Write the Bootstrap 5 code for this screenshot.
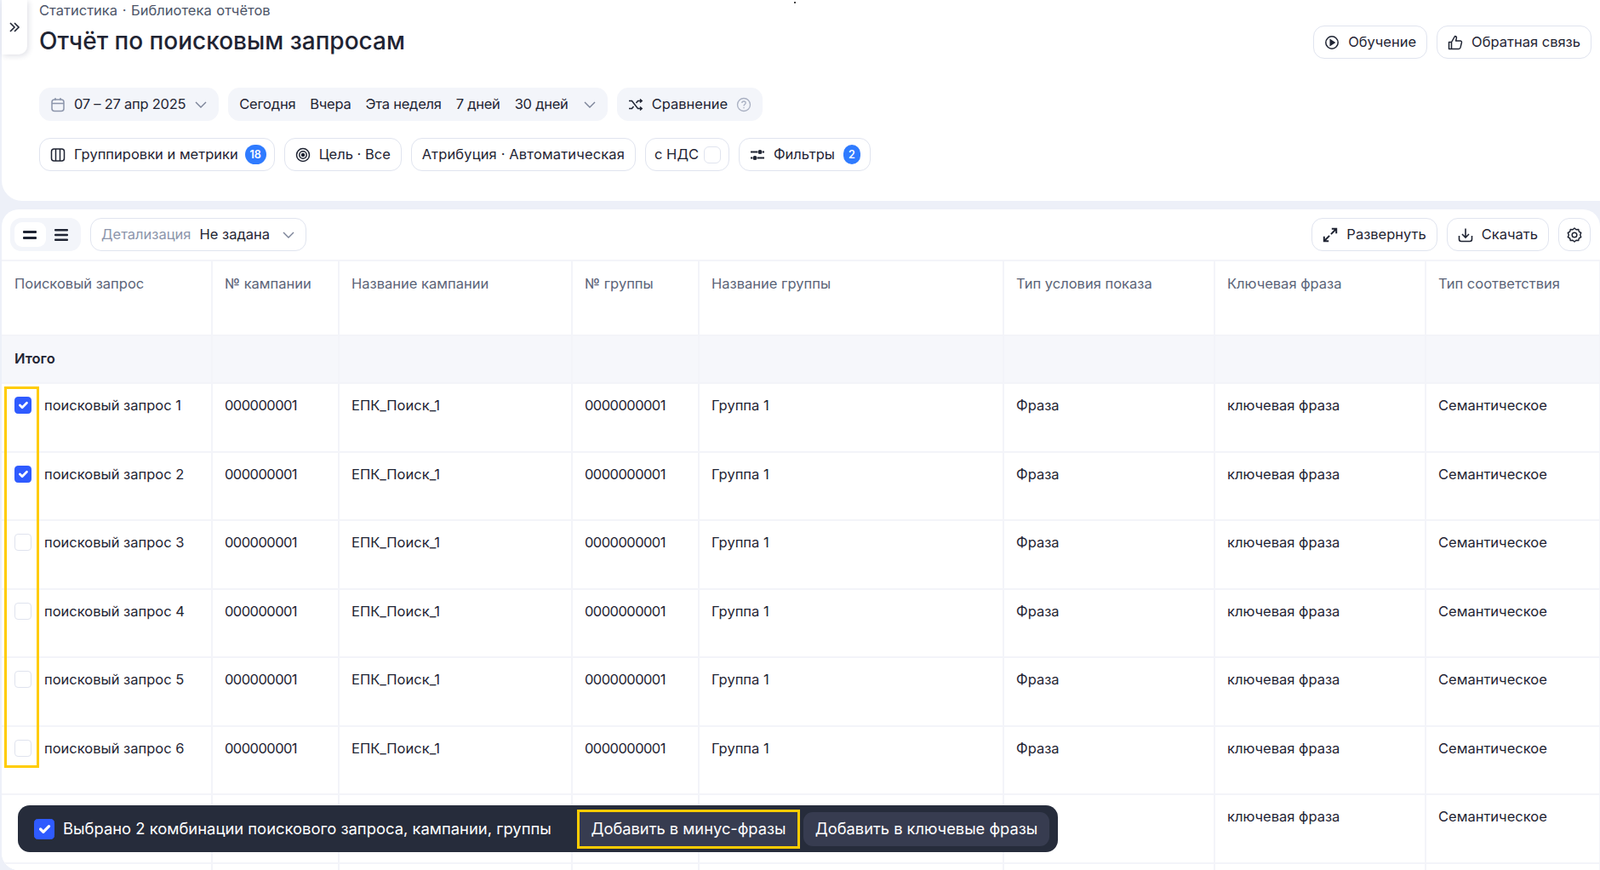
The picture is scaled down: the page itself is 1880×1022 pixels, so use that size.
<!DOCTYPE html>
<html lang="ru">
<head>
<meta charset="utf-8">
<title>Отчёт по поисковым запросам</title>
<link href="https://cdn.jsdelivr.net/npm/bootstrap@5.3.2/dist/css/bootstrap.min.css" rel="stylesheet">
<style>
  html, body     { height:100%; }
  body           { background:#edf0f8; color:#1f2433; font-family:Inter,"Noto Sans",sans-serif; font-size:16.5px; overflow:hidden; }
  svg            { flex:none; display:block; }
  .top-panel     { height:236px; margin-left:2px; background:#fff; border-bottom-left-radius:24px; padding:0 10px 0 44px; position:relative; }
  .side-tab      { position:absolute; left:0; top:0; width:30px; height:64px; background:#fff; border-radius:0 0 10px 0; box-shadow:2px 2px 6px rgba(40,50,90,.14); }
  .speck         { position:absolute; left:931px; top:2px; width:2px; height:2px; background:#444; }
  .crumbs        { color:#4d5568; line-height:24px; height:25px; word-spacing:1px; }
  .page-title    { font-size:28px; line-height:36px; font-weight:500; margin:0; padding-top:5px; }
  .head-row      { height:43px; }
  .head-btns     { gap:11px; padding-top:5px; }
  .tool-btn      { height:39px; padding:0 12px; gap:10px; border:1.5px solid #e0e4ef; border-radius:13px; background:#fff; color:#1f2433; font-size:16.5px; white-space:nowrap; }
  .tool-btn.soft { border-color:#f3f5fa; background:#f3f5fa; }
  .tight-text    { letter-spacing:-.25px; }
  .wide-text     { letter-spacing:.15px; }
  .tool-count    { min-width:25px; height:23px; padding:0 5px; border-radius:12px; background:#2f7bff; color:#fff; font-size:12.500px; font-weight:600; line-height:23px; text-align:center; margin:0 -3px 0 -2px; }
  .count-one     { min-width:20px; padding:0; margin:0 -1px 0 0; }
  .quick-gap     { gap:17px; }
  .mini-check    { width:20px; height:20px; border:1.5px solid #e0e4ef; border-radius:6px; }
  .tool-btn.vat-btn { gap:6px; padding:0 9px 0 10px; }
  .gear-btn      { width:38px; }
  .filter-rows   { padding-top:35px; gap:20px; }
  .btn-line      { gap:11px; }
  .table-panel   { position:relative; height:776px; margin:10px 0 0 2px; background:#fff; border-radius:20px 20px 0 20px; overflow:hidden; }
  .bar-row       { height:59px; padding:10px 11px 0 10px; }
  .view-switch   { width:83px; height:39px; padding:5px; background:#f3f5fa; border-radius:13px; }
  .view-switch span { width:37px; height:29px; border-radius:9px; }
  .view-switch .on  { background:#fff; }
  .muted-label   { color:#8c95ab; }
  .report-table  { table-layout:fixed; width:1878px; border-collapse:collapse; margin:0; }
  .report-table th, .report-table td { border:2px solid #f3f4f9; padding:13px 15px 13px 14px; line-height:24px; vertical-align:top; background:#fff; color:#1f2433; font-weight:400; box-shadow:none; }
  .report-table th:first-child, .report-table td:first-child { border-left:0; padding-left:15px; }
  .report-table thead th { height:88px; padding-top:14px; color:#5b6478; }
  .report-table .total-row td { height:56px; padding-top:14px; background:#f6f7fb; font-weight:600; }
  .report-table tbody tr.data-row td { height:80.5px; }
  .report-table td.num-cell { letter-spacing:-.55px; }
  .pick-cell     { gap:15px; }
  .pick-box      { width:20px; height:20px; margin:2px 0 0; border:1.5px solid #dfe3ee; border-radius:6px; flex:none; box-shadow:none; }
  .pick-box:checked { background-color:#2f5bff; border-color:#2f5bff; }
  .yellow-frame  { position:absolute; left:3px; top:208px; width:41px; height:448px; border:3px solid #ffcc00; pointer-events:none; }
  .action-bar    { position:absolute; left:19px; top:700px; width:1222px; height:55px; padding:0 10px 0 19px; background:#262c3b; border-radius:14px; color:#fff; font-size:18.400px; }
  .action-bar .pick-box { width:24px; height:24px; margin:0 10px 0 0; border-color:#2f5bff; }
  .action-btn    { height:40px; padding:0 12px; background:#373c50; border:0; border-radius:11px; color:#fff; font-size:18.300px; white-space:nowrap; }
  .action-btn.marked { height:46px; width:262px; border:3px solid #ffcc00; border-radius:0; padding:0; }
  .action-btn.plain  { width:289px; margin-left:4px; }
</style>
</head>
<body>

<!-- верхняя панель -->
<div class="top-panel">
  <div class="side-tab d-flex align-items-center justify-content-center">
    <svg width="14" height="14" viewBox="0 0 14 14" fill="none" stroke="#1f2433" stroke-width="1.6"><path d="M2 2l5 5-5 5M7 2l5 5-5 5"/></svg>
  </div>
  <div class="speck"></div>

  <div class="crumbs">Статистика · Библиотека отчётов</div>
  <div class="head-row d-flex align-items-start justify-content-between">
    <h1 class="page-title">Отчёт по поисковым запросам</h1>
    <div class="head-btns d-flex">
      <button class="btn tool-btn d-flex align-items-center">
        <svg width="18" height="18" viewBox="0 0 18 18" fill="none" stroke="#1f2433" stroke-width="1.5"><circle cx="9" cy="9" r="7.2"/><path d="M7.2 5.8v6.4L12 9z" fill="#1f2433"/></svg>
        Обучение
      </button>
      <button class="btn tool-btn d-flex align-items-center">
        <svg width="18" height="18" viewBox="0 0 18 18" fill="none" stroke="#1f2433" stroke-width="1.5" stroke-linejoin="round"><path d="M1.5 8.5h3v8h-3zM4.5 8.5L8.5 1.5c1.6 0 2.2 1.2 1.8 2.6L9.6 7h5.2c1.2 0 1.9 1 1.6 2.1l-1.4 5.8c-.3 1-1 1.6-2 1.6H4.500"/></svg>
        Обратная связь
      </button>
    </div>
  </div>

  <div class="filter-rows d-flex flex-column">
    <div class="btn-line d-flex">
      <button class="btn tool-btn soft tight-text d-flex align-items-center">
        <svg width="18" height="18" viewBox="0 0 18 18" fill="none" stroke="#8c95ab" stroke-width="1.5"><rect x="2" y="3" width="14" height="13.500" rx="3"/><path d="M2 7.500h14M6 1v3M12 1v3"/></svg>
        07 – 27 апр 2025
        <svg width="16" height="16" viewBox="0 0 16 16" fill="none" stroke="#7a8297" stroke-width="1.4"><path d="M2 5l6 6 6-6"/></svg>
      </button>
      <div class="btn tool-btn soft tight-text d-flex align-items-center quick-gap">
        <span>Сегодня</span><span>Вчера</span><span>Эта неделя</span><span>7 дней</span><span>30 дней</span>
        <svg class="ms-n1" width="16" height="16" viewBox="0 0 16 16" fill="none" stroke="#7a8297" stroke-width="1.400"><path d="M2 5l6 6 6-6"/></svg>
      </div>
      <button class="btn tool-btn soft d-flex align-items-center">
        <svg width="18" height="18" viewBox="0 0 18 18" fill="none" stroke="#1f2433" stroke-width="1.500"><path d="M1 4.500h3.500l7 9H16M1 13.500h3.500l2-2.500M9.500 7l2-2.500H16M14 2.500l2.200 2-2.200 2M14 11.500l2.200 2-2.200 2"/></svg>
        Сравнение
        <svg width="18" height="18" viewBox="0 0 18 18" fill="none" stroke="#a9b0c2" stroke-width="1.300"><circle cx="9" cy="9" r="7.500"/><path d="M6.800 7c0-1.300 1-2 2.200-2s2.200.8 2.200 1.900c0 1.600-2.200 1.700-2.200 3.500M9 12v1.300"/></svg>
      </button>
    </div>
    <div class="btn-line d-flex">
      <button class="btn tool-btn d-flex align-items-center">
        <svg width="18" height="18" viewBox="0 0 18 18" fill="none" stroke="#1f2433" stroke-width="1.500"><rect x="1.500" y="2" width="15" height="14" rx="3"/><path d="M6.500 2v14M11.500 2v14"/></svg>
        Группировки и метрики
        <span class="tool-count">18</span>
      </button>
      <button class="btn tool-btn d-flex align-items-center">
        <svg width="18" height="18" viewBox="0 0 18 18" fill="none" stroke="#1f2433" stroke-width="1.500"><circle cx="9" cy="9" r="7.500"/><circle cx="9" cy="9" r="4.200"/><circle cx="9" cy="9" r="1.500" fill="#1f2433"/></svg>
        Цель · Все
      </button>
      <button class="btn tool-btn wide-text d-flex align-items-center">Атрибуция · Автоматическая</button>
      <button class="btn tool-btn vat-btn d-flex align-items-center">с НДС <span class="mini-check"></span></button>
      <button class="btn tool-btn d-flex align-items-center">
        <svg width="18" height="18" viewBox="0 0 18 18" fill="none" stroke="#1f2433" stroke-width="2"><path d="M1 5.500h8M15 5.500h2M1 12.500h2M9 12.500h8"/><circle cx="12" cy="5.500" r="2.500" fill="#1f2433" stroke="none"/><circle cx="6" cy="12.500" r="2.500" fill="#1f2433" stroke="none"/></svg>
        Фильтры
        <span class="tool-count count-one">2</span>
      </button>
    </div>
  </div>
</div>

<!-- таблица -->
<div class="table-panel">
  <div class="bar-row d-flex align-items-start justify-content-between">
    <div class="btn-line d-flex">
      <div class="view-switch d-flex">
        <span class="on d-flex align-items-center justify-content-center">
          <svg width="18" height="12" viewBox="0 0 18 12" fill="#1f2433"><rect x="1" y="1" width="16" height="3" rx="1"/><rect x="1" y="8" width="16" height="3" rx="1"/></svg>
        </span>
        <span class="d-flex align-items-center justify-content-center">
          <svg width="18" height="16" viewBox="0 0 18 16" fill="#1f2433"><rect x="1" y="1" width="16" height="2.500" rx="1"/><rect x="1" y="6.700" width="16" height="2.500" rx="1"/><rect x="1" y="12.500" width="16" height="2.500" rx="1"/></svg>
        </span>
      </div>
      <button class="btn tool-btn d-flex align-items-center">
        <span class="muted-label">Детализация</span> Не задана
        <svg class="ms-1" width="16" height="16" viewBox="0 0 16 16" fill="none" stroke="#7a8297" stroke-width="1.400"><path d="M2 5l6 6 6-6"/></svg>
      </button>
    </div>
    <div class="btn-line d-flex">
      <button class="btn tool-btn d-flex align-items-center">
        <svg width="18" height="18" viewBox="0 0 20 20" fill="none" stroke="#1f2433" stroke-width="2.200"><path d="M11 9l7-7M12 2h6v6M9 11l-7 7M2 12v6h6"/></svg>
        Развернуть
      </button>
      <button class="btn tool-btn d-flex align-items-center">
        <svg width="18" height="18" viewBox="0 0 18 18" fill="none" stroke="#1f2433" stroke-width="1.600"><path d="M9 1.500v10M5 8l4 4 4-4M1.500 10v4c0 1.500 1 2.500 2.500 2.500h10c1.500 0 2.500-1 2.500-2.500v-4"/></svg>
        Скачать
      </button>
      <button class="btn tool-btn gear-btn d-flex align-items-center justify-content-center px-0" aria-label="Настройки">
        <svg width="18" height="18" viewBox="0 0 18 18" fill="none" stroke="#1f2433" stroke-width="1.500" stroke-linejoin="round"><path d="M9 1l2 1.800 2.700-.3.700 2.600 2.300 1.400-1 2.500 1 2.500-2.300 1.400-.7 2.600-2.700-.3L9 17l-2-1.800-2.700.3-.7-2.600-2.300-1.400 1-2.500-1-2.500 2.300-1.400.7-2.600 2.700.3z"/><circle cx="9" cy="9" r="2.800"/></svg>
      </button>
    </div>
  </div>

  <table class="table report-table" id="reportTable">
    <colgroup>
      <col style="width:247px"><col style="width:149px"><col style="width:274px"><col style="width:149px">
      <col style="width:358px"><col style="width:248px"><col style="width:248px"><col style="width:205px">
    </colgroup>
    <thead>
      <tr>
        <th>Поисковый запрос</th><th>№ кампании</th><th>Название кампании</th><th>№ группы</th>
        <th>Название группы</th><th>Тип условия показа</th><th>Ключевая фраза</th><th>Тип соответствия</th>
      </tr>
    </thead>
    <tbody>
      <tr class="total-row"><td>Итого</td><td></td><td></td><td></td><td></td><td></td><td></td><td></td></tr>
    </tbody>
  </table>

  <div class="yellow-frame"></div>

  <!-- плавающая панель выбора -->
  <div class="action-bar d-flex align-items-center">
    <input class="form-check-input pick-box" type="checkbox" checked aria-label="Выбрать">
    <span>Выбрано 2 комбинации поискового запроса, кампании, группы</span>
    <button class="btn action-btn marked ms-auto">Добавить в минус-фразы</button>
    <button class="btn action-btn plain">Добавить в ключевые фразы</button>
  </div>
</div>

<script src="https://cdn.jsdelivr.net/npm/bootstrap@5.3.2/dist/js/bootstrap.bundle.min.js"></script>
<script>
/* строки отчёта: седьмая закрыта панелью выбора, видны только два столбца */
const tb=document.querySelector('#reportTable tbody');
for(let i=1;i<=6;i++){
  tb.insertAdjacentHTML('beforeend',`
    <tr class="data-row">
      <td><div class="pick-cell d-flex align-items-start"><input class="form-check-input pick-box" type="checkbox" aria-label="Выбрать строку ${i}" ${i<3?'checked':''}><span>поисковый запрос ${i}</span></div></td>
      <td class="num-cell">000000001</td>
      <td>ЕПК_Поиск_1</td>
      <td class="num-cell">0000000001</td>
      <td>Группа 1</td>
      <td>Фраза</td>
      <td>ключевая фраза</td>
      <td>Семантическое</td>
    </tr>`);
}
tb.insertAdjacentHTML('beforeend',`
  <tr class="data-row"><td></td><td></td><td></td><td></td><td></td><td></td><td>ключевая фраза</td><td>Семантическое</td></tr>
  <tr class="data-row"><td></td><td></td><td></td><td></td><td></td><td></td><td></td><td></td></tr>`);
</script>
</body>
</html>
